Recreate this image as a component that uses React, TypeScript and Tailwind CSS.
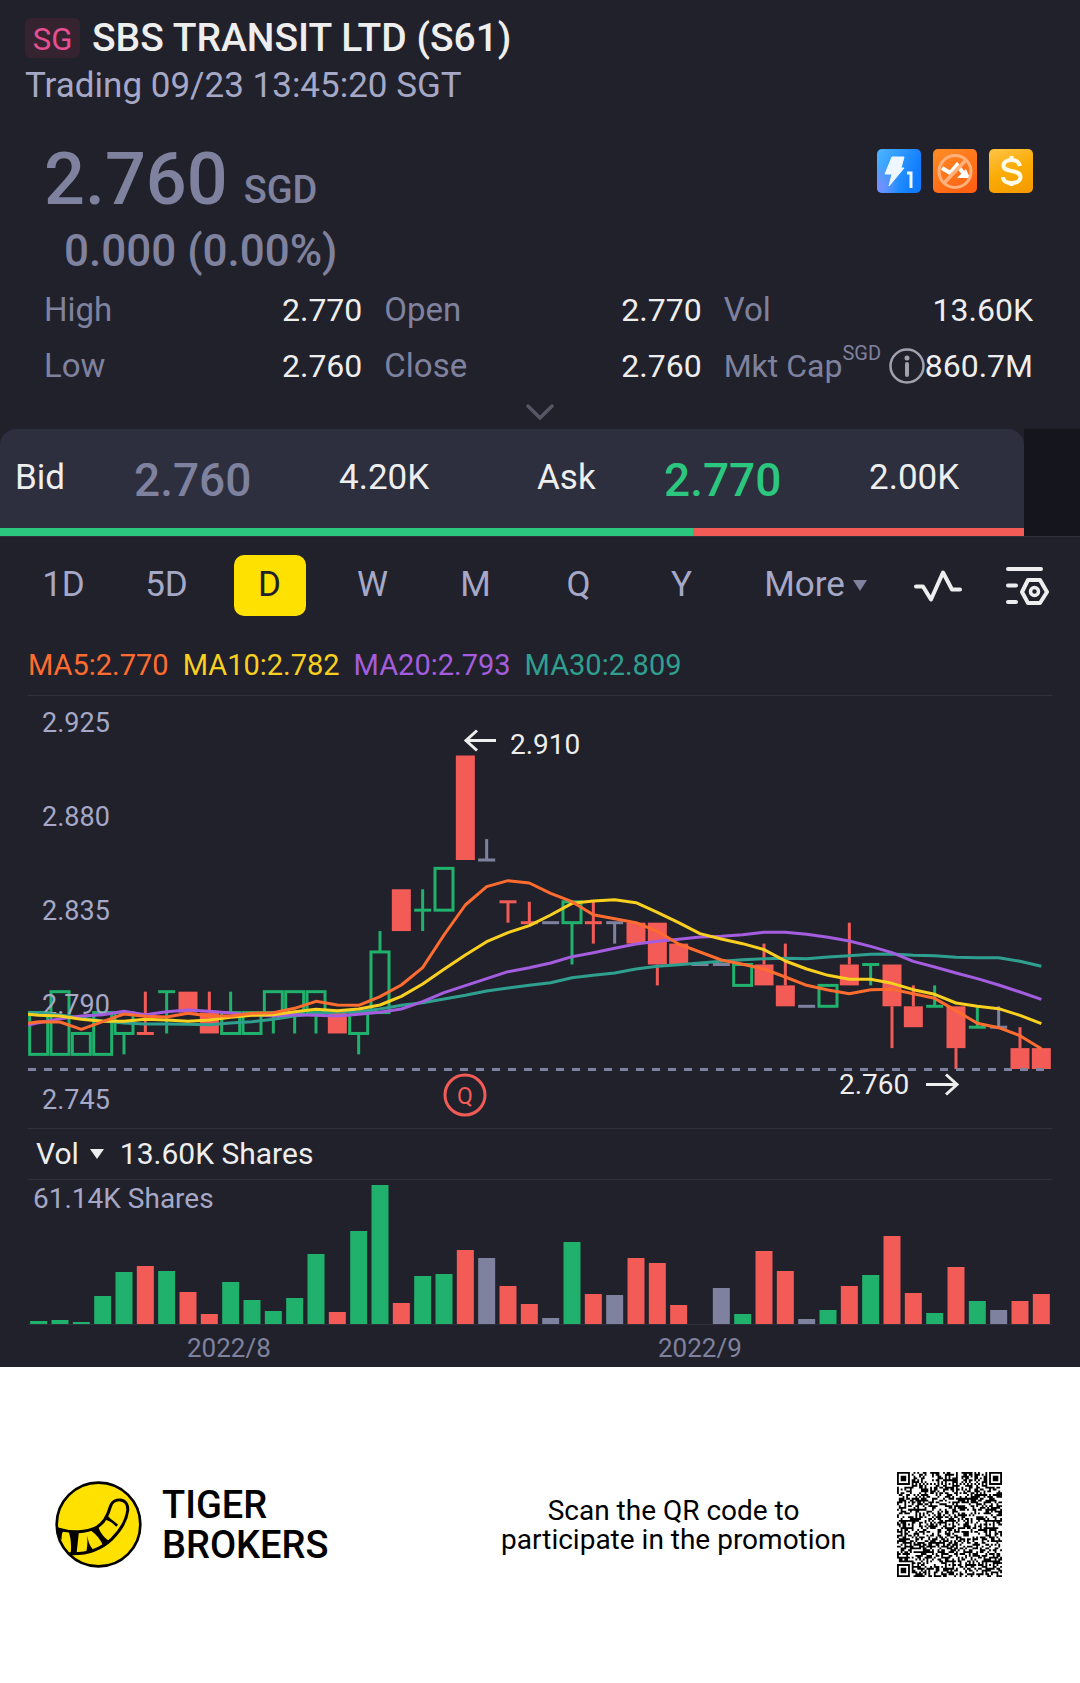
import clsx from "clsx";

type Kind = "up" | "down" | "flat";
// kind, open, close, high, low in ticks of 0.01 above 2.760, volume bar height
type Candle = [Kind, number, number, number, number, number];

const COLORS: Record<Kind, string> = { up: "#20b26c", down: "#f35b57", flat: "#7f829e" };

const CANDLES: Candle[] = [
  ["up", 0.7, 2.7, 2.7, 0.7, 3],
  ["up", 0.7, 3.7, 3.7, 0.7, 4],
  ["up", 0.7, 1.7, 1.7, 0.7, 2],
  ["up", 0.7, 2.7, 2.7, 0.7, 28],
  ["up", 1.7, 2.7, 2.7, 0.7, 52],
  ["down", 1.7, 1.7, 3.7, 1.7, 58],
  ["up", 3.7, 3.7, 3.7, 1.7, 53],
  ["down", 3.7, 2.7, 3.7, 2.7, 32],
  ["down", 2.7, 1.7, 3.7, 1.7, 10],
  ["up", 1.7, 2.7, 3.7, 1.7, 42],
  ["up", 1.7, 2.7, 2.7, 1.7, 24],
  ["up", 2.7, 3.7, 3.7, 1.7, 13],
  ["up", 2.7, 3.7, 3.7, 1.7, 26],
  ["up", 2.7, 3.7, 3.7, 1.7, 70],
  ["down", 2.7, 1.7, 2.7, 1.7, 12],
  ["up", 1.7, 2.7, 2.7, 0.7, 93],
  ["up", 2.7, 5.6, 6.6, 2.7, 139],
  ["down", 8.6, 6.6, 8.6, 6.6, 21],
  ["up", 7.6, 7.6, 8.6, 6.6, 48],
  ["up", 7.6, 9.6, 9.6, 7.6, 50],
  ["down", 15, 10, 15, 10, 74],
  ["flat", 10, 10, 11, 10, 66],
  ["down", 8, 8, 8, 7, 38],
  ["down", 7, 7, 8, 7, 20],
  ["flat", 7, 7, 7, 7, 6],
  ["up", 7, 8, 8, 5, 82],
  ["down", 7, 7, 8, 6, 30],
  ["flat", 7, 7, 7, 6, 29],
  ["down", 7, 6, 7, 6, 66],
  ["down", 7, 5, 7, 4, 61],
  ["down", 6, 5, 6, 5, 19],
  ["flat", 5, 5, 5, 5, 0],
  ["flat", 5, 5, 5, 5, 36],
  ["up", 4, 5, 5, 4, 10],
  ["down", 5, 4, 6, 4, 73],
  ["down", 4, 3, 6, 3, 53],
  ["flat", 3, 3, 3, 3, 5],
  ["up", 3, 4, 4, 3, 14],
  ["down", 5, 4, 7, 4, 38],
  ["up", 5, 5, 5, 4, 49],
  ["down", 5, 3, 5, 1, 88],
  ["down", 3, 2, 4, 2, 31],
  ["up", 3, 3, 4, 3, 11],
  ["down", 3, 1, 3, 0, 57],
  ["up", 2, 2, 3, 2, 23],
  ["flat", 2, 2, 3, 2, 14],
  ["down", 1, 0, 2, 0, 23],
  ["down", 1, 0, 1, 0, 30],
];

// Moving averages, one sample per candle plus a leading one at the left edge
const AVERAGES = [
  {
    label: "MA30:2.809",
    color: "#2fa08f",
    text: "text-[#2fa08f]",
    points: [458, 458, 465, 474, 483, 489, 492, 492, 493, 494, 489, 485, 478, 468, 460, 456, 455, 447, 436, 428, 417, 406, 393, 384, 376, 368, 353, 346, 339, 327, 319, 314, 309, 304, 299, 296, 295, 296, 291, 287, 283, 282, 286, 287, 292, 293, 293, 304, 319],
  },
  {
    label: "MA20:2.793",
    color: "#a45ddf",
    text: "text-[#a45ddf]",
    points: [496, 488, 476, 468, 464, 454, 464, 455, 450, 454, 459, 464, 468, 464, 466, 468, 463, 457, 447, 425, 398, 377, 356, 335, 323, 309, 290, 278, 265, 252, 244, 238, 231, 229, 224, 217, 217, 223, 232, 243, 259, 278, 304, 321, 339, 356, 375, 396, 418],
  },
  {
    label: "MA10:2.782",
    color: "#f9d01f",
    text: "text-[#f9d01f]",
    points: [463, 466, 468, 478, 484, 484, 478, 480, 484, 480, 472, 466, 464, 455, 448, 452, 447, 435, 409, 372, 328, 285, 245, 218, 197, 165, 130, 123, 119, 128, 157, 188, 221, 237, 251, 269, 303, 327, 346, 358, 358, 370, 389, 403, 429, 439, 446, 466, 491],
  },
  {
    label: "MA5:2.770",
    color: "#ff6c2f",
    text: "text-[#ff6c2f]",
    points: [490, 485, 486, 508, 485, 462, 469, 471, 460, 468, 468, 460, 458, 445, 424, 435, 436, 410, 375, 323, 225, 135, 80, 62, 69, 100, 125, 164, 176, 188, 214, 252, 276, 300, 313, 327, 351, 376, 390, 401, 389, 388, 401, 415, 452, 490, 503, 527, 566],
  },
];

const AXIS = [
  { label: "2.925", y: 36 },
  { label: "2.880", y: 130 },
  { label: "2.835", y: 224 },
  { label: "2.790", y: 318 },
  { label: "2.745", y: 413 },
];

const STEP = 1024 / 48;
const cx = (i: number) => (i + 0.5) * STEP;
const tickY = (n: number) => 373 - n * 20.9;

function CandleMark({ candle, index }: { candle: Candle; index: number }) {
  const [kind, open, close, high, low] = candle;
  const color = COLORS[kind];
  const x = cx(index);
  const top = tickY(Math.max(open, close));
  const bottom = tickY(Math.min(open, close));
  return (
    <g stroke={color} strokeWidth={3}>
      {tickY(high) < top && <line x1={x} x2={x} y1={tickY(high)} y2={top} />}
      {tickY(low) > bottom && <line x1={x} x2={x} y1={bottom} y2={tickY(low)} />}
      {open === close ? (
        <line x1={x - 8.5} x2={x + 8.5} y1={top} y2={top} />
      ) : kind === "up" ? (
        <rect x={x - 9} y={top} width={18} height={bottom - top} fill="none" />
      ) : (
        <rect x={x - 9.5} y={top} width={19} height={bottom - top} fill={color} stroke="none" />
      )}
    </g>
  );
}

function PriceChart() {
  return (
    <svg viewBox="0 0 1024 432" className="block w-full" role="img" aria-label="Daily price chart">
      {CANDLES.map((candle, i) => (
        <CandleMark key={i} candle={candle} index={i} />
      ))}
      <g fill="#a5a8c6" fontSize={27}>
        {AXIS.map(({ label, y }) => (
          <text key={label} x={14} y={y}>
            {label}
          </text>
        ))}
      </g>
      {AVERAGES.map(({ label, color, points }) => (
        <polyline
          key={label}
          fill="none"
          stroke={color}
          strokeWidth={3}
          strokeLinejoin="round"
          points={points.map((v, i) => `${i === 0 ? 0 : cx(i - 1)},${164 + v / 3}`).join(" ")}
        />
      ))}
      <line x1={0} x2={1018} y1={373.5} y2={373.5} stroke="#7f829e" strokeWidth={3} strokeDasharray="8 8" />
      <g fill="none" stroke="#eeeeee" strokeWidth={3}>
        <path d="M468 44.500H438M449 34.500l-11 10 11 10" />
        <path d="M898 388.500h30M918 378.500l11 10-11 10" />
      </g>
      <g fill="#eeeeee" fontSize={28}>
        <text x={482} y={58}>2.910</text>
        <text x={811} y={398}>2.760</text>
      </g>
      <circle cx={437} cy={399} r={20} fill="none" stroke="#f35b57" strokeWidth={3} />
      <text x={437} y={408} fontSize={23} textAnchor="middle" fill="#f35b57">
        Q
      </text>
    </svg>
  );
}

function VolumeChart() {
  return (
    <svg viewBox="0 0 1024 187" className="block w-full" role="img" aria-label="Daily volume chart">
      {CANDLES.map(([kind, , , , , height], i) => (
        <rect key={i} x={cx(i) - 8.5} y={144 - height} width={17} height={height} fill={COLORS[kind]} />
      ))}
      <line x1={0} x2={1024} y1={144.5} y2={144.5} stroke="#2e303c" />
      <text x={5} y={28} fontSize={28} fill="#a5a8c6">
        61.14K Shares
      </text>
      <g fill="#7f829e" fontSize={26}>
        <text x={159} y={177}>2022/8</text>
        <text x={630} y={177}>2022/9</text>
      </g>
    </svg>
  );
}

function FeatureIcons() {
  return (
    <div className="flex gap-3">
      <svg viewBox="0 0 44 44" className="size-11">
        <defs>
          <linearGradient id="blue" x1="0" y1="0" x2="1" y2="0.4">
            <stop offset="0" stopColor="#4db5ff" />
            <stop offset="1" stopColor="#0f7bff" />
          </linearGradient>
          <radialGradient id="violet" cx="0" cy="0.85" r="0.5">
            <stop offset="0" stopColor="#7d8dff" />
            <stop offset="1" stopColor="#7d8dff" stopOpacity="0" />
          </radialGradient>
        </defs>
        <rect width="44" height="44" rx="5" fill="url(#blue)" />
        <rect width="44" height="44" rx="5" fill="url(#violet)" />
        <path d="M15 8h12l-3 11h3L12 37l3-12H8z" fill="#eef7ff" stroke="#eef7ff" strokeLinejoin="round" />
        <path d="M30 24h4v15" fill="none" stroke="#eef7ff" strokeWidth="3" />
      </svg>
      <svg viewBox="0 0 44 44" className="size-11">
        <defs>
          <linearGradient id="orange" x1="0.2" y1="0" x2="0.8" y2="1">
            <stop offset="0" stopColor="#ff8a24" />
            <stop offset="1" stopColor="#ff5f12" />
          </linearGradient>
        </defs>
        <rect width="44" height="44" rx="5" fill="url(#orange)" />
        <path d="M9 19l8 5 7-8 7 9" fill="none" stroke="#fff" strokeWidth="4" />
        <path d="M24 29l9-9 4 9z" fill="#fff" />
        <circle cx="22" cy="22.500" r="16" fill="none" stroke="#ffb27c" strokeWidth="3" />
        <path d="M11 34L33 11" stroke="#ffb27c" strokeWidth="3.500" />
      </svg>
      <svg viewBox="0 0 44 44" className="size-11">
        <defs>
          <linearGradient id="gold" x1="0.3" y1="0" x2="0.7" y2="1">
            <stop offset="0" stopColor="#ffc03c" />
            <stop offset="0.5" stopColor="#f9ab05" />
            <stop offset="1" stopColor="#f79c00" />
          </linearGradient>
        </defs>
        <rect width="44" height="44" rx="5" fill="url(#gold)" />
        <g fill="none" stroke="#fffbe8" strokeWidth="4">
          <path d="M31 17c-1-4-4-6-8.500-6s-8 2-8 5.500 3 4.500 8 5.500 9 2 9 6-4 6-9 6-8.500-2-8.500-6" />
          <path d="M22.500 7v4M22.500 33v4" />
        </g>
      </svg>
    </div>
  );
}

function Stat({ label, value }: { label: string; value: string }) {
  return (
    <div className="flex justify-between">
      <dt className="text-[33px] text-[#7f829e]">{label}</dt>
      <dd>{value}</dd>
    </div>
  );
}

function TigerLogo() {
  return (
    <svg viewBox="0 0 262 262" className="size-[87px]" aria-hidden="true">
      <circle cx="131" cy="131" r="126" fill="#ffe100" stroke="#000" strokeWidth="8" />
      <g fill="none" stroke="#000" strokeWidth="9" strokeLinecap="round">
        <path d="M8 144C50 157 95 155 124 140C148 127 160 101 166 79C172 60 187 56 197 57C213 59 220 72 219 88C216 115 198 148 171 175C137 207 90 221 44 219" />
      </g>
      <path d="M4 138l26 12c-9 2-10 10-10 28C10 168 6 156 4 138zM40 150l32 3-7 65-18 2c3-25 1-50-7-70zM97 163c3 20 8 32 18 44l-21 8c4-19 4-35 3-52zM108 149l22-11c6 17 15 30 32 42l-17 15c-8-19-20-34-37-46zM152 117l8-11c10 11 19 15 30 26l-6 6c-10-11-19-17-32-21z" />
    </svg>
  );
}

const QR_SIZE = 57;

function isDark(x: number, y: number) {
  for (const [fx, fy] of [[0, 0], [QR_SIZE - 7, 0], [0, QR_SIZE - 7]]) {
    const ring = Math.max(Math.abs(x - fx - 3), Math.abs(y - fy - 3));
    if (ring <= 4) return ring === 3 || ring <= 1;
  }
  for (const ax of [6, 28, 50]) {
    for (const ay of [6, 28, 50]) {
      const ring = Math.max(Math.abs(x - ax), Math.abs(y - ay));
      if (ring <= 2) return ring !== 1;
    }
  }
  if (x === 6 || y === 6) return (x + y) % 2 === 0;
  let h = Math.imul(x + 11, 374761393) ^ Math.imul(y + 7, 668265263);
  h = Math.imul(h ^ (h >>> 13), 1274126177);
  return ((h ^ (h >>> 16)) & 1) === 1;
}

function QrCode() {
  let d = "";
  for (let y = 0; y < QR_SIZE; y++) {
    for (let x = 0; x < QR_SIZE; x++) {
      if (isDark(x, y)) d += `M${x} ${y}h1v1h-1z`;
    }
  }
  return (
    <svg viewBox={`0 0 ${QR_SIZE} ${QR_SIZE}`} className="size-[105px]" role="img" aria-label="QR code">
      <path d={d} />
    </svg>
  );
}

const PERIODS = ["1D", "5D", "D", "W", "M", "Q", "Y"];

export default function App() {
  return (
    <div className="bg-[#21212b] font-['Roboto','Liberation_Sans',sans-serif] text-[#eeeeee]">
      <header className="px-[25px] pt-4">
        <div className="flex items-center gap-3">
          <span className="flex h-10 w-[55px] items-center justify-center rounded-md bg-[#35232f] pt-1 text-[31px] leading-9 text-[#e84f92]">
            SG
          </span>
          <h1 className="text-[39px] leading-[44px] font-medium">SBS TRANSIT LTD (S61)</h1>
        </div>
        <p className="text-[35px] leading-[52px] text-[#a5a8c6]">Trading 09/23 13:45:20 SGT</p>
      </header>

      <section className="mt-7 pr-[47px] pl-11">
        <div className="flex items-start justify-between">
          <div className="flex items-end gap-4 font-medium text-[#7f829e]">
            <span className="text-[72px] leading-[80px]">2.760</span>
            <span className="text-[38px] leading-[60px]">SGD</span>
          </div>
          <div className="pt-[9px]">
            <FeatureIcons />
          </div>
        </div>
        <p className="pl-5 text-[44px] leading-[62px] font-medium text-[#7f829e]">0.000 (0.00%)</p>
        <dl className="grid grid-cols-[318fr_317fr_309fr] gap-x-[22px] text-[32px] leading-[56px]">
          <Stat label="High" value="2.770" />
          <Stat label="Open" value="2.770" />
          <Stat label="Vol" value="13.60K" />
          <Stat label="Low" value="2.760" />
          <Stat label="Close" value="2.760" />
          <div className="flex justify-between whitespace-nowrap">
            <dt className="flex text-[#7f829e]">
              Mkt Cap
              <span className="text-[20px] leading-[30px]">SGD</span>
            </dt>
            <dd className="flex items-center">
              <svg viewBox="0 0 36 36" className="size-9" fill="none" stroke="#a0a1ae">
                <circle cx="18" cy="18" r="16.500" strokeWidth="2.500" />
                <path d="M18 16v11" strokeWidth="4" strokeLinecap="round" />
                <circle cx="18" cy="10" r="2.500" fill="#a0a1ae" stroke="none" />
              </svg>
              860.7M
            </dd>
          </div>
        </dl>
      </section>
      <button type="button" aria-label="Show more" className="flex h-[35px] w-full items-center justify-center">
        <svg viewBox="0 0 28 16" className="h-4 w-7" fill="none" stroke="#555765" strokeWidth="3.500" strokeLinecap="round">
          <path d="M2 2l12 12L26 2" />
        </svg>
      </button>

      <section className="border-b border-[#2e303c] bg-[#15151d] pr-14">
        <div className="bg-[#21212b]">
          <div className="overflow-hidden rounded-t-2xl bg-[#2d2e3e]">
            <div className="grid h-[99px] grid-cols-2 items-center text-[35px]">
              <div className="grid grid-cols-[119fr_205fr_173fr] items-center pl-[15px]">
                <span>Bid</span>
                <span className="pt-1 text-[46px] font-medium text-[#7f829e]">2.760</span>
                <span>4.20K</span>
              </div>
              <div className="grid grid-cols-[127fr_205fr_155fr] items-center pl-[25px]">
                <span>Ask</span>
                <span className="pt-1 text-[46px] font-medium text-[#2bc77e]">2.770</span>
                <span>2.00K</span>
              </div>
            </div>
            <div className="flex h-2">
              <div className="w-[67.7%] bg-[#2bc77e]" />
              <div className="flex-1 bg-[#f35b57]" />
            </div>
          </div>
        </div>
      </section>

      <nav className="flex items-center justify-between pt-[18px] pr-[31px] pl-3 text-[35px] text-[#a5a8c6]">
        <div className="grid w-[721px] grid-cols-7">
          {PERIODS.map((period) => (
            <button
              key={period}
              type="button"
              className={clsx(
                "mx-auto h-[61px] w-[72px] rounded-[10px]",
                period === "D" && "bg-[#ffe100] text-[#21212b]",
              )}
            >
              {period}
            </button>
          ))}
        </div>
        <button type="button" className="flex items-center gap-2">
          More
          <svg viewBox="0 0 14 11" className="h-[11px] w-[14px]">
            <path d="M0 0h14L7 11z" fill="#7f829e" />
          </svg>
        </button>
        <button type="button" aria-label="Line chart" className="ml-4">
          <svg viewBox="0 0 48 32" className="h-8 w-12" fill="none" stroke="#eeeeee" strokeWidth="4" strokeLinecap="round" strokeLinejoin="round">
            <path d="M2 16.500h7l8 13 12-27 9 17h8" />
          </svg>
        </button>
        <button type="button" aria-label="Chart settings" className="ml-3">
          <svg viewBox="0 0 44 40" className="h-10 w-11" fill="none" stroke="#eeeeee" strokeWidth="4" strokeLinecap="round" strokeLinejoin="round">
            <path d="M3 3h33M3 19.500h8M3 36h8M23 14h12l7 12-7 11H23l-6-11z" />
            <circle cx="29.500" cy="25.500" r="4" strokeWidth="3.500" />
          </svg>
        </button>
      </nav>

      <main className="px-7">
        <ul className="mt-7 flex flex-row-reverse justify-end gap-[14px] border-b border-[#2e303c] pb-[9px] text-[29px] leading-[42px]">
          {AVERAGES.map(({ label, text }) => (
            <li key={label} className={text}>
              {label}
            </li>
          ))}
        </ul>
        <PriceChart />
        <div className="flex items-center gap-4 border-y border-[#2e303c] pl-2 text-[30px] leading-[50px]">
          <button type="button" className="flex items-center gap-[11px]">
            Vol
            <svg viewBox="0 0 14 10" className="h-[10px] w-[14px]">
              <path d="M0 0h14L7 10z" fill="#eeeeee" />
            </svg>
          </button>
          <span>13.60K Shares</span>
        </div>
        <VolumeChart />
      </main>

      <footer className="flex items-center bg-white pt-[105px] pr-[78px] pb-[106px] pl-[55px] text-black">
        <TigerLogo />
        <p className="ml-5 text-[38px] leading-[40px] font-medium">
          TIGER
          <br />
          BROKERS
        </p>
        <p className="mr-[51px] ml-auto text-center text-[28px] leading-[29px]">
          Scan the QR code to
          <br />
          participate in the promotion
        </p>
        <QrCode />
      </footer>
    </div>
  );
}
